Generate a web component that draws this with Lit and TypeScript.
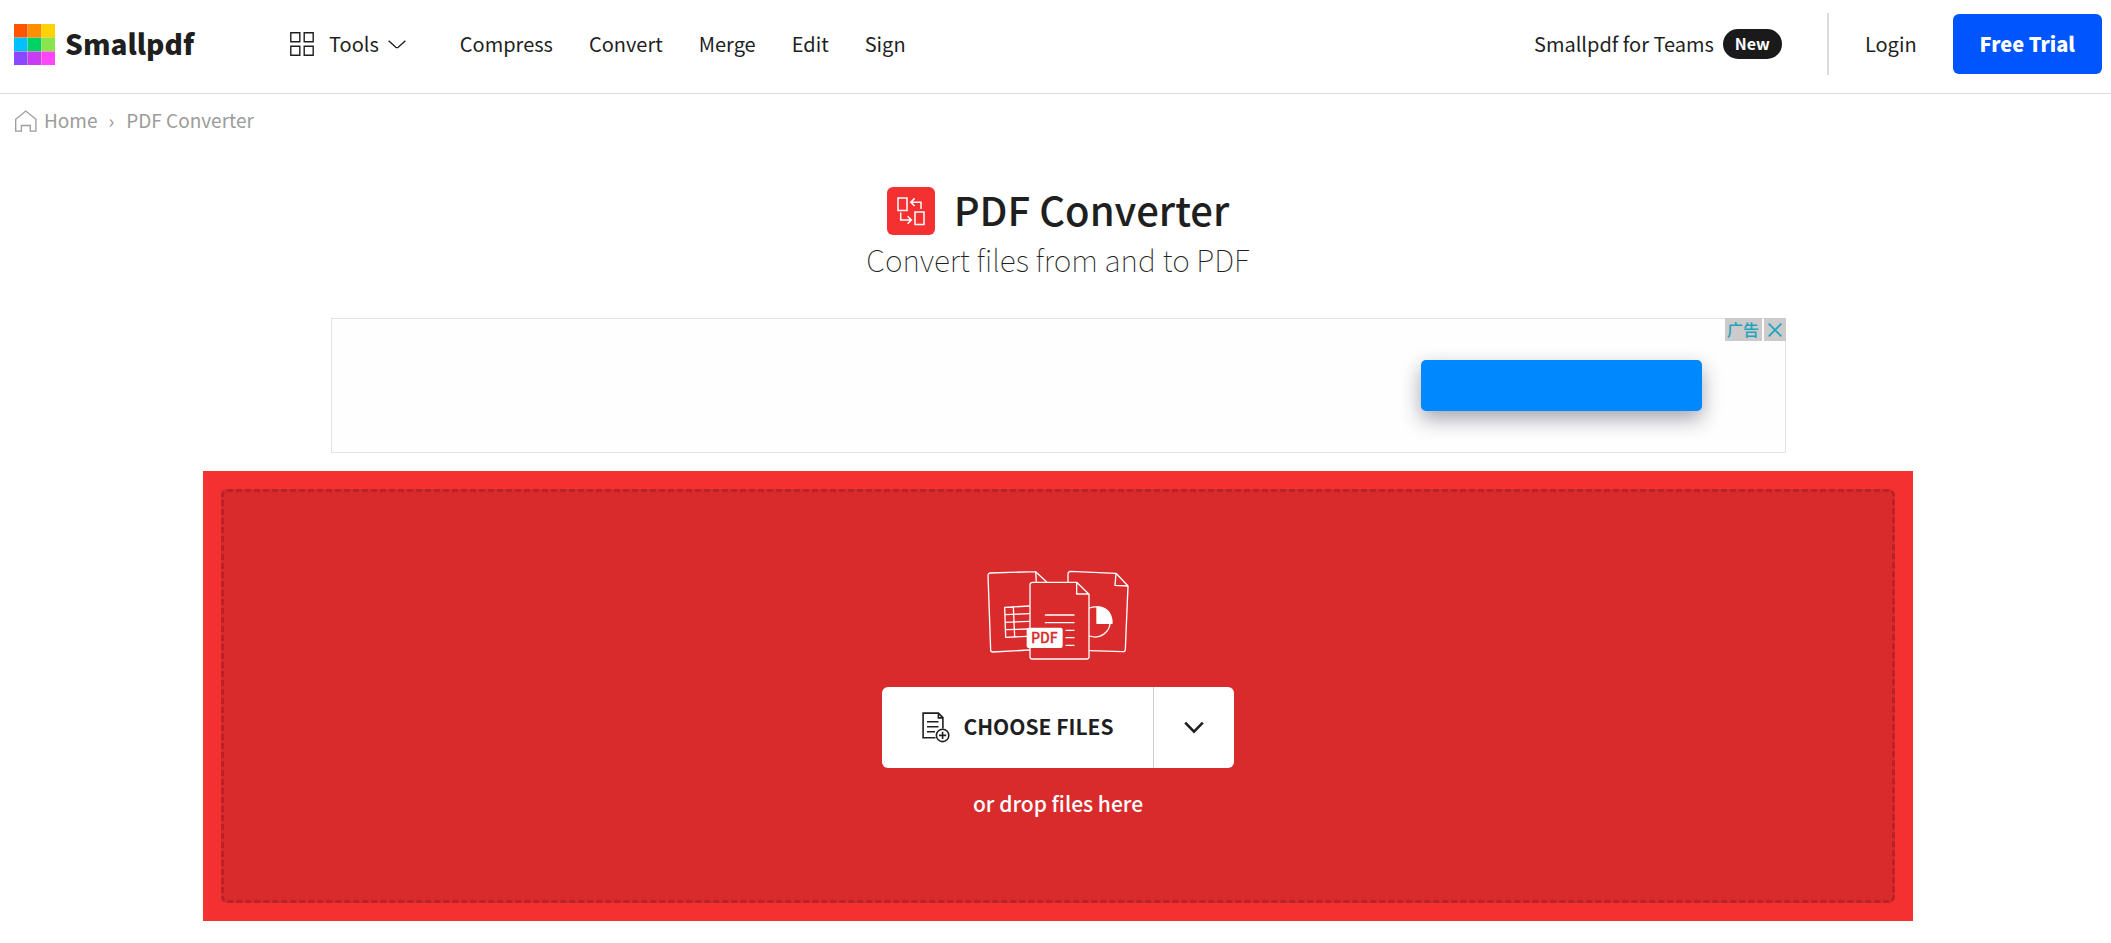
import { LitElement, html, css, svg } from "lit";
import { customElement } from "lit/decorators.js";

const LOGO_COLORS = [
  "#ff5500", "#ff8e00", "#ffd200",
  "#00c0ff", "#00d267", "#88e64c",
  "#8a48ff", "#c83cf5", "#ff46fb",
];

const NAV_LINKS = ["Compress", "Convert", "Merge", "Edit", "Sign"];

@customElement("site-header")
export class SiteHeader extends LitElement {
  static styles = css`
    :host {
      display: block;
    }
    .bar {
      display: flex;
      align-items: center;
      padding: 13px 9px 18px 14px;
      border-bottom: 1px solid #dcdcdc;
      font-size: 20px;
      line-height: 30px;
    }
    a {
      color: inherit;
      text-decoration: none;
      white-space: nowrap;
    }
    svg {
      display: block;
      flex: none;
    }
    .logo {
      display: flex;
      align-items: center;
      gap: 10px;
      margin-right: 96px;
      font-size: 28px;
      font-weight: 900;
    }
    .logo-name {
      padding-bottom: 2px;
    }
    .nav {
      display: flex;
      align-items: center;
      gap: 36px;
      flex: 1;
    }
    .tools {
      display: flex;
      align-items: center;
      padding: 0;
      margin-right: 18px;
      border: 0;
      background: none;
      color: inherit;
      font: inherit;
      cursor: pointer;
    }
    .tools-label {
      margin: 0 9px 0 15px;
    }
    .teams {
      display: flex;
      align-items: center;
      gap: 9px;
    }
    .badge {
      padding: 0 12px 2px;
      border-radius: 15px;
      background: #1a1a1a;
      color: #fff;
      font-size: 16px;
      font-weight: 700;
      line-height: 28px;
    }
    .divider {
      width: 2px;
      height: 62px;
      margin: 0 36px 0 45px;
      background: #dcdcdc;
    }
    .trial {
      margin-left: 36px;
      padding: 15px 27px;
      border-radius: 6px;
      background: #0055ff;
      color: #fff;
      font-weight: 900;
    }
  `;

  render() {
    return html`
      <header class="bar">
        <a class="logo" href="#">
          <svg width="41" height="41" viewBox="0 0 41 41" aria-hidden="true">
            <rect width="41" height="41" fill="#e9d9a8" />
            ${LOGO_COLORS.map(
              (c, i) => svg`<rect x=${(i % 3) * 13.8} y=${Math.floor(i / 3) * 13.8} width="13.4" height="13.4" fill=${c} />`
            )}
          </svg>
          <span class="logo-name">Smallpdf</span>
        </a>
        <nav class="nav">
          <button class="tools" type="button">
            <svg width="24" height="24" viewBox="0 0 24 24" fill="none" stroke="#1f1f1f" stroke-width="1.4" aria-hidden="true">
              <path d="M.8.8h9v9h-9zM14.2.8h9v9h-9zM.8 14.2h9v9h-9zM14.2 14.2h9v9h-9z" />
            </svg>
            <span class="tools-label">Tools</span>
            <svg width="18" height="9" viewBox="0 0 18 9" fill="none" stroke="#1f1f1f" stroke-width="1.4" aria-hidden="true">
              <path d="M.6.8 7.8 7.2q1.2.9 2.4 0L17.4.8" />
            </svg>
          </button>
          ${NAV_LINKS.map((label) => html`<a href="#">${label}</a>`)}
        </nav>
        <a class="teams" href="#"><span>Smallpdf for Teams</span><span class="badge">New</span></a>
        <div class="divider"></div>
        <a href="#">Login</a>
        <a class="trial" href="#">Free Trial</a>
      </header>
    `;
  }
}

@customElement("ad-banner")
export class AdBanner extends LitElement {
  static styles = css`
    :host {
      display: block;
    }
    .banner {
      position: relative;
      display: flex;
      justify-content: flex-end;
      padding: 41px 83px;
      border: 1px solid #e2e2e2;
      background: #fefefe;
    }
    .action {
      width: 281px;
      height: 51px;
      padding: 0;
      border: 0;
      border-radius: 5px;
      background: #0088ff;
      box-shadow: 0 8px 20px rgba(30, 30, 60, 0.4);
    }
    .corner {
      position: absolute;
      top: -1px;
      right: -1px;
      display: flex;
      gap: 2px;
      color: #1ea5bd;
      font-size: 16px;
      font-weight: 500;
      line-height: 22px;
    }
    .label {
      width: 37px;
      background: #cccacb;
      text-align: center;
    }
    .close {
      display: grid;
      place-items: center;
      width: 22px;
      height: 23px;
      padding: 0;
      border: 0;
      background: #cccacb;
      color: inherit;
    }
  `;

  render() {
    return html`
      <div class="banner">
        <button class="action" type="button" aria-label="Open"></button>
        <div class="corner">
          <span class="label">广告</span>
          <button class="close" type="button" aria-label="Close">
            <svg width="14" height="14" viewBox="0 0 14 14" stroke="currentColor" stroke-width="1.8" aria-hidden="true">
              <path d="M.7.7l12.6 12.6M13.3.7.7 13.3" />
            </svg>
          </button>
        </div>
      </div>
    `;
  }
}

@customElement("drop-zone")
export class DropZone extends LitElement {
  static styles = css`
    :host {
      display: block;
    }
    .frame {
      padding: 18px;
      background: #f43030;
    }
    .zone {
      display: flex;
      flex-direction: column;
      align-items: center;
      padding: 78px 20px 81px;
      border: 3px dashed #b92325;
      border-radius: 6px;
      background: #d92b2c;
    }
    svg {
      display: block;
    }
    .files {
      margin-bottom: 27px;
    }
    .pdf {
      font-size: 42px;
      font-weight: 500;
    }
    .picker {
      display: flex;
      border-radius: 6px;
      background: #fff;
      overflow: hidden;
    }
    .picker button {
      display: flex;
      align-items: center;
      height: 81px;
      border: 0;
      background: none;
      color: #1f1f1f;
      font: inherit;
      cursor: pointer;
    }
    .choose {
      gap: 13px;
      padding: 0 39px 0 40px;
    }
    .picker .choose-label {
      padding-bottom: 4px;
      font-size: 21px;
      font-weight: 700;
      line-height: 32px;
    }
    .picker .more {
      justify-content: center;
      width: 81px;
      padding: 0;
      border-left: 1px solid #cfcfcf;
    }
    .hint {
      margin: 19px 0 0;
      color: #fff;
      font-size: 21px;
      font-weight: 500;
      line-height: 32px;
    }
  `;

  render() {
    return html`
      <section class="frame">
        <div class="zone">
          <svg class="files" width="144" height="90" viewBox="78 64 432 270" fill="none" stroke="#fff" stroke-width="4" stroke-linejoin="round" stroke-linecap="round" aria-hidden="true">
            <path d="M208 304 98 310q-6 0-6-6L84 80q0-6 6-7l137-4 33 31M227 69l2 30" />
            <path d="M208 172l-74 4 3 90 64-3M135 198l73-3M136 221l72-3M137 243l66-2M160 175l4 90" />
            <path d="M324 100v-24q1-8 8-8l136 6 36 38-8 190q0 8-8 7l-98-3M468 74l-3 36 39 2" />
            <path d="M389 178A45 45 0 1 1 389 262" />
            <path d="M411 174v50h45Q456 178 411 174z" fill="#fff" />
            <path d="M218 101h132l37 36v187q0 7-7 7H217q-7 0-7-7V108q0-7 8-7zM350 101v35h37" fill="#d92b2c" />
            <path d="M256 199h86M256 222h86M318 245h24M318 267h24M318 290h24" />
            <rect x="202" y="239" width="104" height="57" rx="4" fill="#fff" />
            <text class="pdf" x="253" y="283" text-anchor="middle" fill="#d92b2c" stroke="#d92b2c" stroke-width="1">PDF</text>
          </svg>
          <div class="picker">
            <button class="choose" type="button">
              <svg width="28" height="31" viewBox="0 0 28 31" fill="none" stroke="#1f1f1f" stroke-width="1.6" aria-hidden="true">
                <path d="M13.5 25.8H1.1V1.1h15.3l4.5 4.6v10.8M16.4 1.1v4.8h4.5M5 9.8h11.5M5 14.8h11.5M5 19.8h8" />
                <circle cx="20.6" cy="23.4" r="6.2" />
                <path d="M20.6 19.8V27M17 23.4h7.2" />
              </svg>
              <span class="choose-label">CHOOSE FILES</span>
            </button>
            <button class="more" type="button" aria-label="More sources">
              <svg width="20" height="13" viewBox="0 0 20 13" fill="none" stroke="#1f1f1f" stroke-width="2.6" aria-hidden="true">
                <path d="M1.2 1.6 10 10.6l8.8-9" />
              </svg>
            </button>
          </div>
          <p class="hint">or drop files here</p>
        </div>
      </section>
    `;
  }
}

@customElement("app-root")
export class AppRoot extends LitElement {
  static styles = css`
    :host {
      display: block;
      background: #fff;
      color: #1f1f1f;
      font-family: "Noto Sans CJK SC", "Noto Sans", sans-serif;
    }
    .crumbs {
      display: flex;
      align-items: center;
      padding: 11px 14px 13px;
      color: #9c9c9c;
      font-size: 19px;
      line-height: 30px;
    }
    .crumbs a {
      display: flex;
      align-items: center;
      gap: 7px;
      color: inherit;
      text-decoration: none;
    }
    .crumb {
      padding-bottom: 2px;
    }
    .sep {
      margin: 0 12px 0 11px;
    }
    .page {
      display: flex;
      flex-direction: column;
      align-items: center;
      padding: 37px 0 20px 5px;
    }
    .heading {
      display: flex;
      align-items: center;
      gap: 19px;
    }
    h1 {
      margin: 0;
      padding-bottom: 4px;
      font-size: 40px;
      font-weight: 500;
      line-height: 44px;
    }
    .tile {
      display: block;
      flex: none;
    }
    .subtitle {
      margin: 2px 0 37px;
      font-size: 30px;
      font-weight: 100;
      line-height: 44px;
    }
    ad-banner {
      width: calc(100% - 48px);
      max-width: 1455px;
      margin-bottom: 18px;
    }
    drop-zone {
      width: calc(100% - 48px);
      max-width: 1710px;
    }
  `;

  render() {
    return html`
      <site-header></site-header>
      <nav class="crumbs" aria-label="Breadcrumb">
        <a href="#">
          <svg width="23" height="22" viewBox="0 0 23 22" fill="none" stroke="currentColor" stroke-width="1.3" aria-hidden="true">
            <path d="M1.7 9.2 11.8 1l10.1 8.2v11.9h-5.6v-5.6H7.4v5.6H1.7z" />
          </svg>
          <span class="crumb">Home</span>
        </a>
        <span class="crumb sep">›</span>
        <span class="crumb">PDF Converter</span>
      </nav>
      <main class="page">
        <div class="heading">
          <svg class="tile" width="48" height="48" viewBox="0 0 48 48" fill="none" stroke="#fff" stroke-width="1.5" aria-hidden="true">
            <rect width="48" height="48" rx="6" fill="#f43030" stroke="none" />
            <path d="M11 11h9v12.5h-9zM28 25h9v12.5h-9z" />
            <path d="M34 22v-6.8H24M27.6 11.4 23.8 15.2l3.8 3.8M13.7 25.5V33H24M20.6 29.2l3.8 3.8-3.8 3.8" />
          </svg>
          <h1>PDF Converter</h1>
        </div>
        <p class="subtitle">Convert files from and to PDF</p>
        <ad-banner></ad-banner>
        <drop-zone></drop-zone>
      </main>
    `;
  }
}
